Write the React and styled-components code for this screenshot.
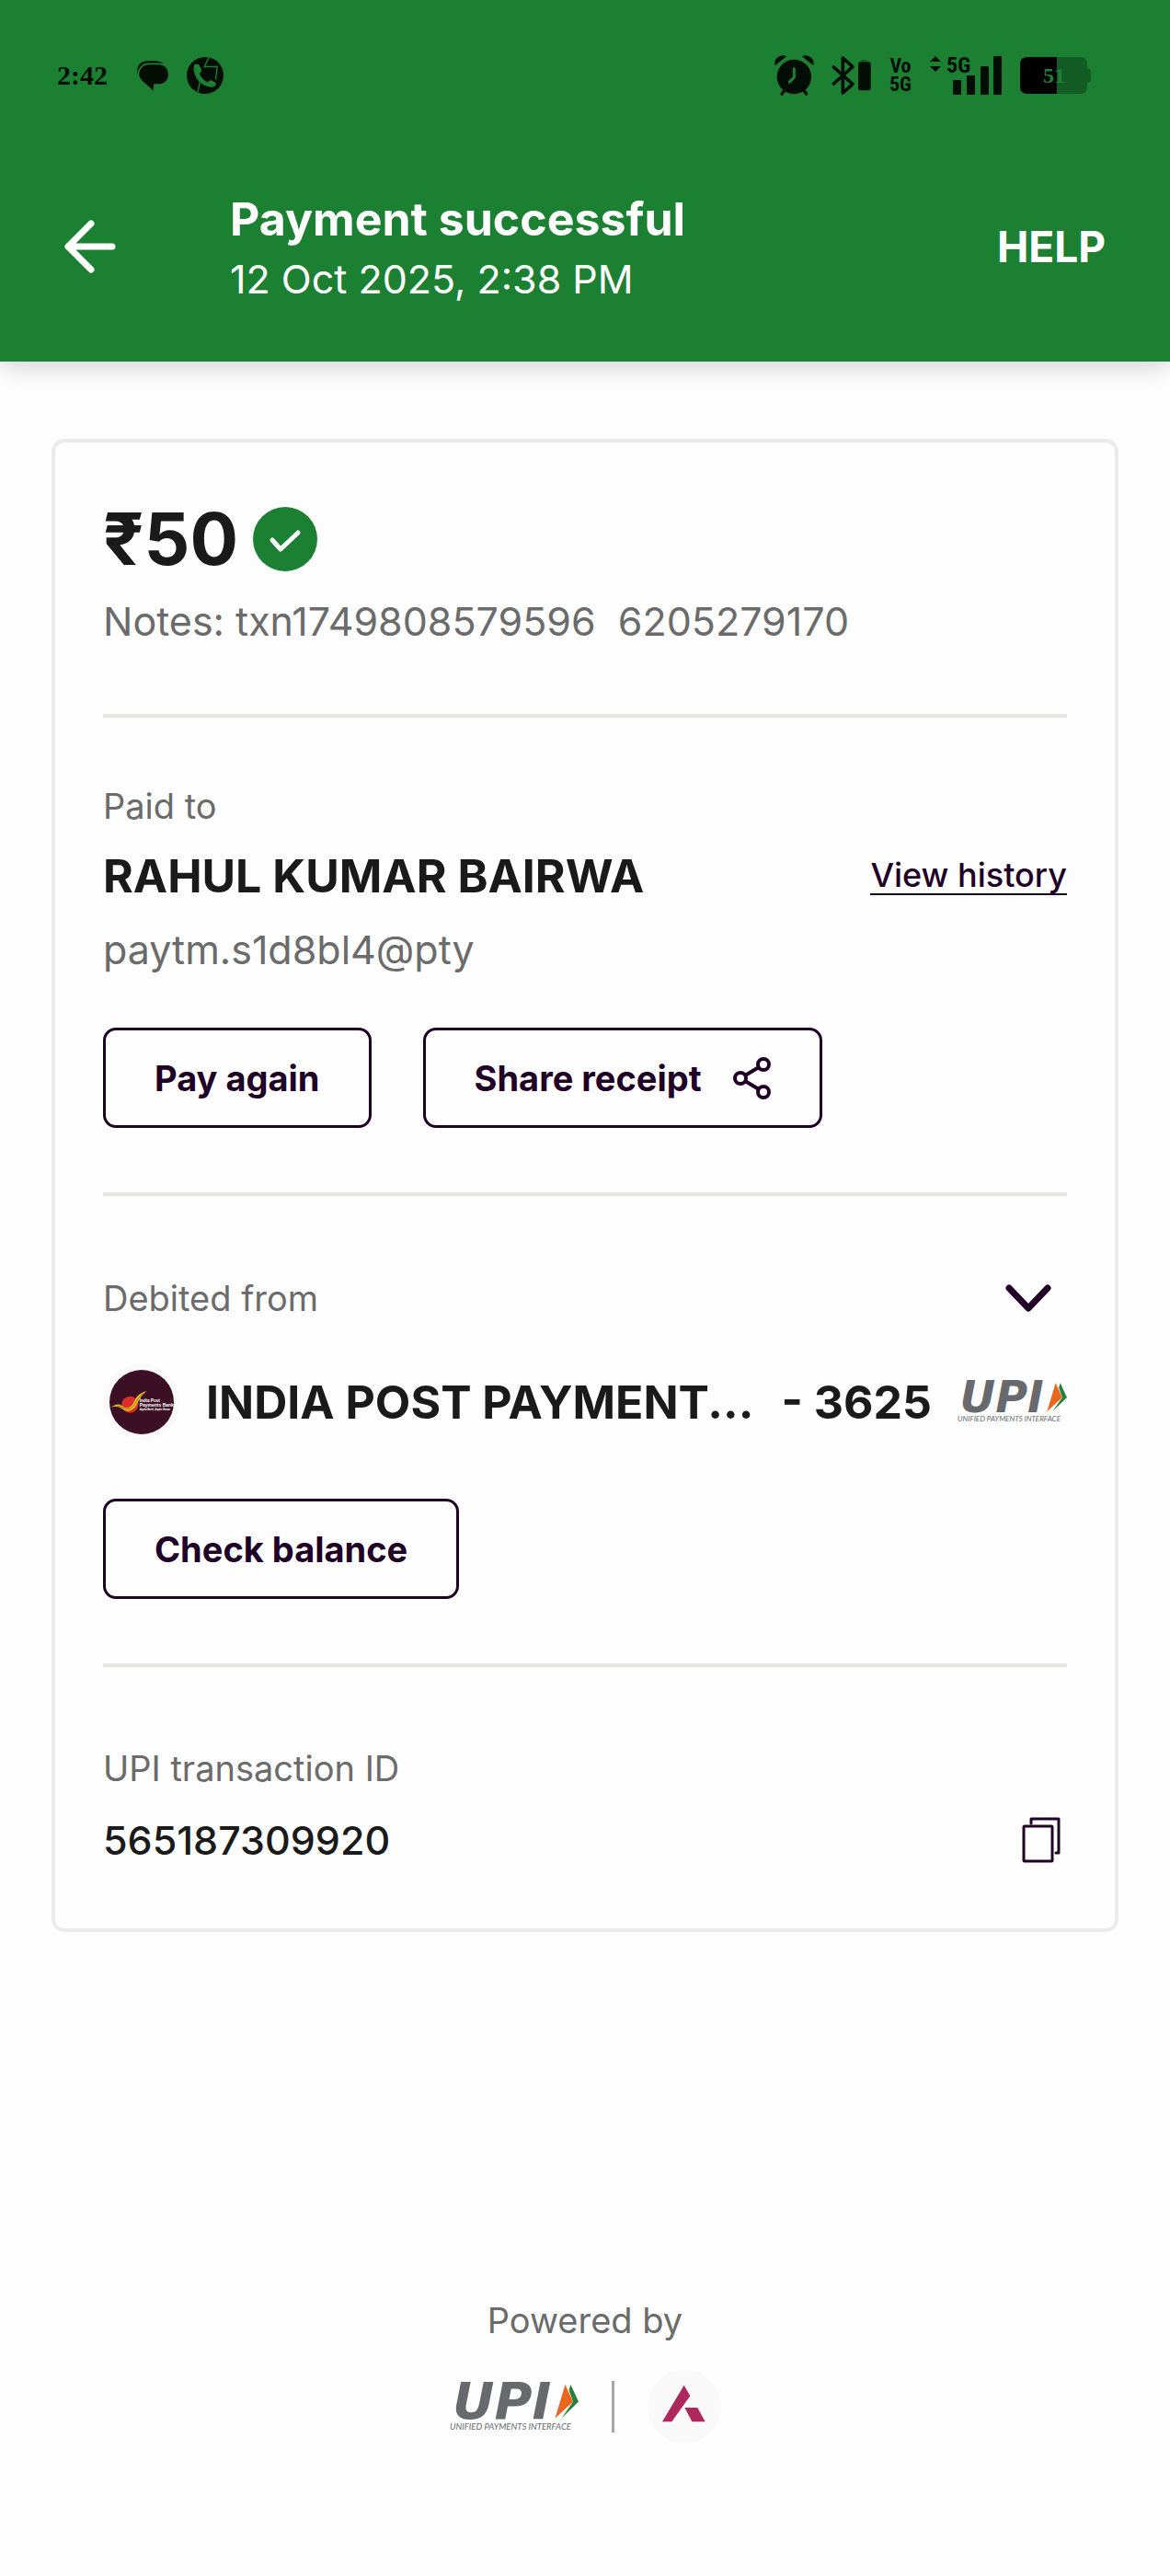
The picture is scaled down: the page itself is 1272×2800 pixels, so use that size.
import React from "react";
import styled, { createGlobalStyle } from "styled-components";

const green = "#1c8033";
const ink = "#1a1a1a";
const plum = "#210028";
const muted = "#6b6b6b";
const glyph = "#020d04";

const GlobalStyle = createGlobalStyle`
  *, *::before, *::after { box-sizing: border-box; }
  body {
    margin: 0;
    background: #fefefe;
    color: ${ink};
    font-family: Inter, "Noto Sans", sans-serif;
  }
  button { font-family: inherit; cursor: pointer; }
  svg { display: block; flex: none; overflow: visible; }
  h1, h2, p { margin: 0; }
`;

const Page = styled.div`
  display: flex;
  flex-direction: column;
  min-height: 100vh;
`;

const Header = styled.header`
  background: ${green};
  color: #fff;
  box-shadow: 0 4px 26px rgba(0, 0, 0, 0.2);
`;

const StatusBar = styled.div`
  display: flex;
  align-items: center;
  justify-content: space-between;
  height: 164px;
  padding: 0 86px 0 62px;
  color: ${glyph};
`;

const StatusGroup = styled.div`
  display: flex;
  align-items: center;
  gap: 20px;
`;

const Clock = styled.time`
  margin-right: 12px;
  font: 700 30px/40px "Liberation Serif", serif;
`;

const NetworkLabel = styled.span`
  text-align: center;
  font: 700 22px/20px "Liberation Sans Narrow", "Roboto Condensed", Roboto, sans-serif;
`;

const AppBar = styled.div`
  display: flex;
  align-items: center;
  padding: 39px 70px 60px;
`;

const PlainButton = styled.button`
  padding: 0;
  border: 0;
  background: none;
  color: inherit;
`;

const HelpButton = styled(PlainButton)`
  font-size: 46px;
  line-height: 60px;
  font-weight: 700;
`;

const Heading = styled.div`
  flex: 1;
  padding-left: 124px;
`;

const Title = styled.h1`
  font-size: 50px;
  line-height: 70px;
  font-weight: 700;
`;

const Timestamp = styled.p`
  font-size: 43px;
  line-height: 60px;
`;

const Main = styled.main`
  padding: 84px 56px 0;
`;

const Card = styled.article`
  padding: 0 52px;
  border: 4px solid #ebebeb;
  border-radius: 14px;
`;

const Section = styled.section`
  padding: ${(p) => p.$top}px 0 ${(p) => p.$bottom}px;
  & + & { border-top: 4px solid #e4e6e4; }
`;

const Row = styled.div`
  display: flex;
  align-items: center;
  justify-content: ${(p) => (p.$spread ? "space-between" : "flex-start")};
  gap: ${(p) => p.$gap || 0}px;
  margin-top: ${(p) => p.$top || 0}px;
`;

const Amount = styled.h2`
  font-size: 78px;
  line-height: 70px;
  font-weight: 700;
`;

const Detail = styled.p`
  margin-top: ${(p) => p.$top || 0}px;
  color: ${muted};
  font-size: 43px;
  line-height: 60px;
  white-space: pre-wrap;
`;

const Label = styled.p`
  color: ${muted};
  font-size: 38px;
  line-height: 52px;
`;

const Name = styled.h2`
  font-size: 50px;
  line-height: 60px;
  font-weight: 700;
`;

const BankName = styled(Name)`
  flex: 1;
  min-width: 0;
  padding-left: 28px;
`;

const Account = styled(Name)`
  padding-right: 28px;
`;

const Reference = styled.p`
  font-size: 43px;
  line-height: 60px;
  font-weight: 500;
`;

const HistoryLink = styled.a`
  color: ${plum};
  font-size: 36px;
  line-height: 40px;
  font-weight: 500;
  text-decoration: none;
  border-bottom: 2px solid ${plum};
`;

const OutlineButton = styled.button`
  display: flex;
  align-items: center;
  gap: 34px;
  height: 109px;
  padding: 0 53px;
  border: 3px solid ${plum};
  border-radius: 14px;
  background: transparent;
  color: ${plum};
  font-size: 38px;
  font-weight: 700;
`;

const ToggleButton = styled(PlainButton)`
  padding: 0 17px;
  color: ${plum};
`;

const CopyButton = styled(PlainButton)`
  padding: 0 7px;
  color: ${plum};
`;

const Footer = styled.footer`
  display: flex;
  flex-direction: column;
  align-items: center;
  gap: 28px;
  margin-top: auto;
  padding-bottom: 144px;
`;

const Partners = styled.div`
  display: flex;
  align-items: center;
  gap: 36px;
`;

const Rule = styled.span`
  width: 3px;
  height: 56px;
  background: #a6a6a6;
`;

const ChatIcon = () => (
  <svg width="34" height="33" viewBox="0 0 102 98" fill="currentColor" aria-hidden="true">
    <path d="M1 42C-2 14 12 0 34 0H58C72 0 80 4 87 9C76 7 66 7 52 7H37C16 8 5 22 1 42Z" />
    <path d="M40 12H70C90 12 102 26 102 44C102 62 90 75 72 75H54V98L17 65C10 58 7 52 7 44C7 26 20 12 40 12Z" />
  </svg>
);

const CallIcon = () => (
  <svg width="40" height="40" viewBox="0 0 118 118" aria-hidden="true">
    <circle cx="59" cy="59" r="59" fill={glyph} />
    <path d="M70 2L57 31H98L93 72M44 70L36 112" fill="none" stroke={green} strokeWidth="4" />
    <path
      d="M24 26C30 20 38 22 41 28L47 40C49 45 44 49 41 53C46 66 56 76 68 81C72 76 76 73 81 76L92 82C96 86 94 92 87 95C72 100 50 90 38 76C25 61 19 36 24 26Z"
      fill={green}
    />
  </svg>
);

const AlarmIcon = () => (
  <svg width="43" height="44" viewBox="0 0 129 131" aria-hidden="true">
    <path d="M2 33C-4 12 18 -6 39 3ZM127 33C133 12 111 -6 90 3Z" fill={glyph} />
    <path d="M34 112L24 126M95 112L104 126" stroke={glyph} strokeWidth="10" strokeLinecap="round" />
    <circle cx="64" cy="70" r="56" fill={glyph} />
    <path d="M64 44V72L49 87" fill="none" stroke={green} strokeWidth="9" strokeLinecap="round" />
  </svg>
);

const BluetoothIcon = () => (
  <svg width="42" height="42" viewBox="0 0 126 126" aria-hidden="true">
    <path d="M4 36L66 91L34 120V6L66 35L4 90" fill="none" stroke={glyph} strokeWidth="11" strokeLinejoin="round" strokeLinecap="round" />
    <path d="M92 18V15Q92 12 96 12H110Q114 12 114 15V18Z" fill="#145c25" />
    <rect x="84" y="19" width="41" height="93" rx="7" fill={glyph} />
  </svg>
);

const SignalIcon = () => (
  <svg width="78" height="42" viewBox="0 0 78 42" fill={glyph} aria-hidden="true">
    <path d="M0 6L6 0L12 6ZM0 11L6 17L12 11Z" />
    <text x="18" y="18" fontFamily="Liberation Sans Narrow, Roboto Condensed, Roboto, sans-serif" fontSize="24" fontWeight="700">5G</text>
    <rect x="25" y="26" width="9" height="16" rx="1" />
    <rect x="40" y="21" width="9" height="21" rx="1" />
    <rect x="55" y="11" width="9" height="31" rx="1" />
    <rect x="69" y="0" width="9" height="42" rx="1" />
  </svg>
);

const BatteryIcon = () => (
  <svg width="77" height="40" viewBox="0 0 77 40" aria-hidden="true">
    <path d="M40 0H66Q73 0 73 8V12Q77 13 77 16V24Q77 27 73 28V32Q73 40 66 40H40Z" fill="#145c25" />
    <path d="M8 0H40V40H8Q0 40 0 32V8Q0 0 8 0Z" fill="#000" />
    <text x="25" y="28" fontFamily="Liberation Serif, serif" fontSize="24" fontWeight="700" fill="#1f7f37">51</text>
  </svg>
);

const BackIcon = () => (
  <svg width="56" height="58" viewBox="0 0 56 58" fill="none" stroke="currentColor" strokeWidth="7" strokeLinecap="round" strokeLinejoin="round">
    <path d="M29 4L4 29L29 54M4 29H52" />
  </svg>
);

const CheckIcon = () => (
  <svg width="70" height="70" viewBox="0 0 70 70" role="img" aria-label="Successful">
    <circle cx="35" cy="35" r="35" fill={green} />
    <path d="M21 36L30 46L49 28" fill="none" stroke="#fff" strokeWidth="5" strokeLinecap="round" strokeLinejoin="round" />
  </svg>
);

const ShareIcon = () => (
  <svg width="41" height="46" viewBox="0 0 41 46" fill="none" stroke="currentColor" strokeWidth="4" aria-hidden="true">
    <circle cx="33" cy="8" r="6" />
    <circle cx="8" cy="23" r="6" />
    <circle cx="33" cy="38" r="6" />
    <path d="M13 20L28 11M13 26L28 35" />
  </svg>
);

const ChevronIcon = () => (
  <svg width="50" height="30" viewBox="0 0 50 30" fill="none" stroke="currentColor" strokeWidth="7" strokeLinecap="round" strokeLinejoin="round">
    <path d="M4 4L25 26L46 4" />
  </svg>
);

const CopyIcon = () => (
  <svg width="42" height="50" viewBox="0 0 42 50" fill="none" stroke="currentColor" strokeWidth="3" strokeLinecap="round" strokeLinejoin="round">
    <rect x="2" y="10" width="31" height="38" rx="1" />
    <path d="M10 7V2H40V39H37" />
  </svg>
);

const BankLogo = () => (
  <svg width="84" height="84" viewBox="0 0 252 252" role="img" aria-label="India Post Payments Bank">
    <circle cx="126" cy="126" r="126" fill="#f9f9f9" />
    <circle cx="126" cy="126" r="105" fill="#3b1024" />
    <circle cx="88" cy="134" r="27" fill="#dc2f2b" />
    <path d="M26 143C44 131 52 131 62 138C80 154 94 142 104 120C112 102 124 96 142 90C126 104 120 114 112 130C100 156 78 162 62 148C52 140 42 138 26 143Z" fill="#e8c51d" />
    <path d="M46 139C66 138 74 160 96 142C112 126 114 108 130 98" fill="none" stroke="#9d3b1d" strokeWidth="2" />
    <text fill="#fff" fontFamily="Liberation Sans, sans-serif" fontWeight="700">
      <tspan x="119" y="127" fontSize="14">India Post</tspan>
      <tspan x="119" y="141" fontSize="15">Payments Bank</tspan>
      <tspan x="119" y="152" fontSize="8" fontStyle="italic">Aapka Bank, Aapke Dwaar</tspan>
    </text>
  </svg>
);

const UpiLogo = ({ width, height }) => (
  <svg width={width} height={height} viewBox="0 0 280 98" role="img" aria-label="UPI, Unified Payments Interface">
    <text fill="#68696d" fontStyle="italic">
      <tspan x="6" y="74" fontFamily="DejaVu Sans, sans-serif" fontSize="112" fontWeight="700">UPI</tspan>
      <tspan x="0" y="98" fontFamily="Lato, sans-serif" fontSize="19">UNIFIED PAYMENTS INTERFACE</tspan>
    </text>
    <path d="M263 0L280 37L243 73L268 37L259 12Z" fill="#27803b" />
    <path d="M251 0L268 37L229 73Z" fill="#e9661f" />
  </svg>
);

const AxisLogo = () => (
  <svg width="80" height="80" viewBox="0 0 240 240" role="img" aria-label="Axis Bank">
    <circle cx="120" cy="120" r="120" fill="#f9f9f9" />
    <path d="M119 50L139 85L79 169H48ZM121 123H163L188 169H145Z" fill="#ad285d" />
  </svg>
);

export default function App() {
  return (
    <Page>
      <GlobalStyle />
      <Header>
        <StatusBar>
          <StatusGroup>
            <Clock>2:42</Clock>
            <ChatIcon />
            <CallIcon />
          </StatusGroup>
          <StatusGroup>
            <AlarmIcon />
            <BluetoothIcon />
            <NetworkLabel>
              Vo
              <br />
              5G
            </NetworkLabel>
            <SignalIcon />
            <BatteryIcon />
          </StatusGroup>
        </StatusBar>
        <AppBar>
          <PlainButton aria-label="Back"><BackIcon /></PlainButton>
          <Heading>
            <Title>Payment successful</Title>
            <Timestamp>12 Oct 2025, 2:38 PM</Timestamp>
          </Heading>
          <HelpButton>HELP</HelpButton>
        </AppBar>
      </Header>

      <Main>
        <Card>
          <Section $top={70} $bottom={71}>
            <Row $gap={16}>
              <Amount>₹50</Amount>
              <CheckIcon />
            </Row>
            <Detail $top={24}>{"Notes: txn1749808579596  6205279170"}</Detail>
          </Section>

          <Section $top={70} $bottom={70}>
            <Label>Paid to</Label>
            <Row $top={20} $spread>
              <Name>RAHUL KUMAR BAIRWA</Name>
              <HistoryLink href="#history">View history</HistoryLink>
            </Row>
            <Detail $top={20}>paytm.s1d8bl4@pty</Detail>
            <Row $top={55} $gap={56}>
              <OutlineButton>Pay again</OutlineButton>
              <OutlineButton>
                Share receipt
                <ShareIcon />
              </OutlineButton>
            </Row>
          </Section>

          <Section $top={85} $bottom={70}>
            <Row $spread>
              <Label>Debited from</Label>
              <ToggleButton aria-label="Show account details"><ChevronIcon /></ToggleButton>
            </Row>
            <Row $top={45}>
              <BankLogo />
              <BankName>INDIA POST PAYMENT...</BankName>
              <Account>- 3625</Account>
              <UpiLogo width={119} height={42} />
            </Row>
            <Row $top={63}>
              <OutlineButton>Check balance</OutlineButton>
            </Row>
          </Section>

          <Section $top={84} $bottom={66}>
            <Label>UPI transaction ID</Label>
            <Row $top={22} $spread>
              <Reference>565187309920</Reference>
              <CopyButton aria-label="Copy transaction ID"><CopyIcon /></CopyButton>
            </Row>
          </Section>
        </Card>
      </Main>

      <Footer>
        <Label>Powered by</Label>
        <Partners>
          <UpiLogo width={140} height={49} />
          <Rule />
          <AxisLogo />
        </Partners>
      </Footer>
    </Page>
  );
}
